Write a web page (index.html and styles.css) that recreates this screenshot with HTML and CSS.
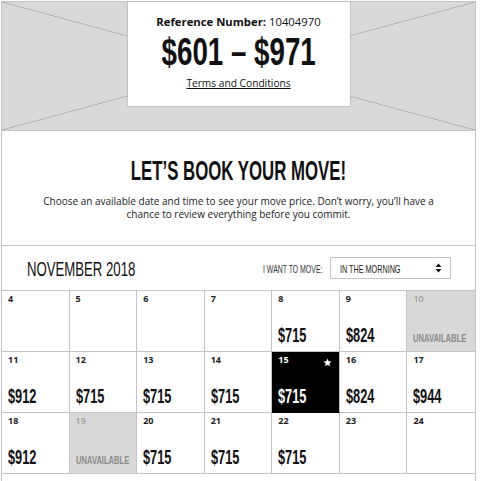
FILE: index.html
```html
<!DOCTYPE html>
<html>
<head>
<meta charset="utf-8">
<link rel="stylesheet" href="styles.css">
</head>
<body>
<div class="page">
  <div class="hero">
    <div class="card">
      <div class="ref"><b>Reference Number:</b> 10404970</div>
      <div class="range"><span class="cond">$601 – $971</span></div>
      <div class="terms"><a href="#">Terms and Conditions</a></div>
    </div>
  </div>
  <div class="intro">
    <h1 class="title"><span class="cond">LET’S BOOK YOUR MOVE!</span></h1>
    <p class="lead">Choose an available date and time to see your move price. Don’t worry, you’ll have a chance to review everything before you commit.</p>
  </div>
  <div class="cal-head">
    <div class="month"><span class="cond">NOVEMBER 2018</span></div>
    <div class="when">
      <span class="when-label"><span class="cond">I WANT TO MOVE:</span></span>
      <div class="select">
        <span class="select-text"><span class="cond">IN THE MORNING</span></span>
        <svg class="caret" width="7" height="10" viewBox="0 0 7 10"><path d="M3.5 0.5 L6.5 4 L0.5 4 Z M3.5 9.5 L6.5 6 L0.5 6 Z" fill="#111"/></svg>
      </div>
    </div>
  </div>
  <div class="grid">
    <div class="cell"><span class="num">4</span></div>
    <div class="cell"><span class="num">5</span></div>
    <div class="cell"><span class="num">6</span></div>
    <div class="cell"><span class="num">7</span></div>
    <div class="cell"><span class="num">8</span><span class="price"><span class="cond">$715</span></span></div>
    <div class="cell"><span class="num">9</span><span class="price"><span class="cond">$824</span></span></div>
    <div class="cell off"><span class="num">10</span><span class="na"><span class="cond">UNAVAILABLE</span></span></div>

    <div class="cell"><span class="num">11</span><span class="price"><span class="cond">$912</span></span></div>
    <div class="cell"><span class="num">12</span><span class="price"><span class="cond">$715</span></span></div>
    <div class="cell"><span class="num">13</span><span class="price"><span class="cond">$715</span></span></div>
    <div class="cell"><span class="num">14</span><span class="price"><span class="cond">$715</span></span></div>
    <div class="cell sel"><span class="num">15</span>
      <svg class="star" width="9" height="9" viewBox="0 0 24 24"><path d="M12 1.5l3.1 7.1 7.7.7-5.8 5.1 1.7 7.6L12 18l-6.7 4 1.7-7.6L1.2 9.3l7.7-.7z" fill="#fff"/></svg>
      <span class="price"><span class="cond">$715</span></span></div>
    <div class="cell"><span class="num">16</span><span class="price"><span class="cond">$824</span></span></div>
    <div class="cell"><span class="num">17</span><span class="price"><span class="cond">$944</span></span></div>

    <div class="cell"><span class="num">18</span><span class="price"><span class="cond">$912</span></span></div>
    <div class="cell off"><span class="num">19</span><span class="na"><span class="cond">UNAVAILABLE</span></span></div>
    <div class="cell"><span class="num">20</span><span class="price"><span class="cond">$715</span></span></div>
    <div class="cell"><span class="num">21</span><span class="price"><span class="cond">$715</span></span></div>
    <div class="cell"><span class="num">22</span><span class="price"><span class="cond">$715</span></span></div>
    <div class="cell"><span class="num">23</span></div>
    <div class="cell"><span class="num">24</span></div>
  </div>
  <div class="foot"></div>
</div>
</body>
</html>
```
FILE: styles.css
```css
* { box-sizing: border-box; }
body {
  margin: 0;
  font-family: "Open Sans", "Liberation Sans", sans-serif;
  color: #111;
  background: #fff;
}
.page {
  width: 475px;
  margin: 1px 0 0 1px;
  border: 1px solid #c4c4c4;
  border-bottom: none;
}
.cond {
  display: inline-block;
  white-space: nowrap;
  font-family: "Liberation Sans Narrow", "Liberation Sans", sans-serif;
  transform: scaleX(0.65);
}
.hero {
  height: 129px;
  border-bottom: 1px solid #c4c4c4;
  background-color: #d9d9d9;
  background-image:
    linear-gradient(to top right, transparent calc(50% - 0.7px), #a8a8a8 50%, transparent calc(50% + 0.7px)),
    linear-gradient(to bottom right, transparent calc(50% - 0.7px), #a8a8a8 50%, transparent calc(50% + 0.7px));
  display: flex;
  justify-content: center;
  align-items: flex-start;
}
.card {
  width: 224px;
  height: 105px;
  background: #fff;
  border: 1px solid #c4c4c4;
  border-top: none;
  text-align: center;
  padding-top: 12px;
}
.ref {
  font-size: 11.3px;
  line-height: 16px;
  color: #111;
}
.ref b { font-weight: 700; }
.range {
  font-size: 38px;
  line-height: 40px;
  font-weight: 700;
}
.range .cond { transform: scaleX(0.73); }
.terms {
  margin-top: 3px;
  font-size: 10.2px;
  line-height: 16px;
}
.terms a { color: #111; text-decoration: underline; }
.intro {
  height: 115px;
  border-bottom: 1px solid #c4c4c4;
  text-align: center;
  padding-top: 22px;
}
.title {
  margin: 0;
  font-size: 28px;
  line-height: 32px;
  font-weight: 700;
}
.title .cond { transform: scaleX(0.6); }
.lead {
  margin: 8px auto 0;
  width: 410px;
  font-size: 10px;
  line-height: 13px;
  color: #222;
}
.cal-head {
  height: 44px;
  display: flex;
  align-items: center;
  justify-content: space-between;
  padding: 0 24px 0 25px;
}
.month {
  font-size: 21px;
  line-height: 24px;
}
.month .cond { transform: scaleX(0.627); transform-origin: left center; }
.when {
  display: flex;
  align-items: center;
  gap: 5px;
}
.when-label {
  font-size: 11px;
  color: #333;
  width: 62px;
  white-space: nowrap;
}
.when-label .cond { transform: scaleX(0.63); transform-origin: left center; }
.select {
  width: 121px;
  height: 22px;
  border: 1px solid #c4c4c4;
  background: #fff;
  display: flex;
  align-items: center;
  justify-content: space-between;
  padding: 0 8px 0 9px;
  font-size: 11px;
  color: #222;
}
.select-text { width: 70px; }
.select-text .cond { transform: scaleX(0.657); transform-origin: left center; }
.caret { display: block; }
.grid {
  display: grid;
  grid-template-columns: repeat(7, minmax(0, 1fr));
  border-top: 1px solid #c4c4c4;
}
.cell {
  position: relative;
  height: 61px;
  min-width: 0;
  border-right: 1px solid #c4c4c4;
  border-bottom: 1px solid #c4c4c4;
  display: flex;
  flex-direction: column;
  justify-content: space-between;
  align-items: flex-start;
  padding: 1px 6px 6px;
  background: #fff;
}
.cell:nth-child(7n) { border-right: none; }
.num {
  font-size: 9px;
  line-height: 14px;
  font-weight: 700;
  color: #222;
}
.price {
  font-size: 20px;
  line-height: 20px;
  font-weight: 700;
  color: #111;
}
.price .cond { transform: scaleX(0.64); transform-origin: left center; }
.na {
  font-size: 11px;
  line-height: 12px;
  font-weight: 700;
  color: #8a8a8a;
  margin-bottom: 1px;
}
.na .cond { transform: scaleX(0.69); transform-origin: left center; }
.off { background: #d9d9d9; }
.off .num { color: #999; font-weight: 600; }
.sel { background: #000; border-bottom-color: #000; }
.sel .num, .sel .price { color: #fff; }
.star {
  position: absolute;
  top: 6px;
  right: 7px;
}
.foot { height: 40px; }
```
